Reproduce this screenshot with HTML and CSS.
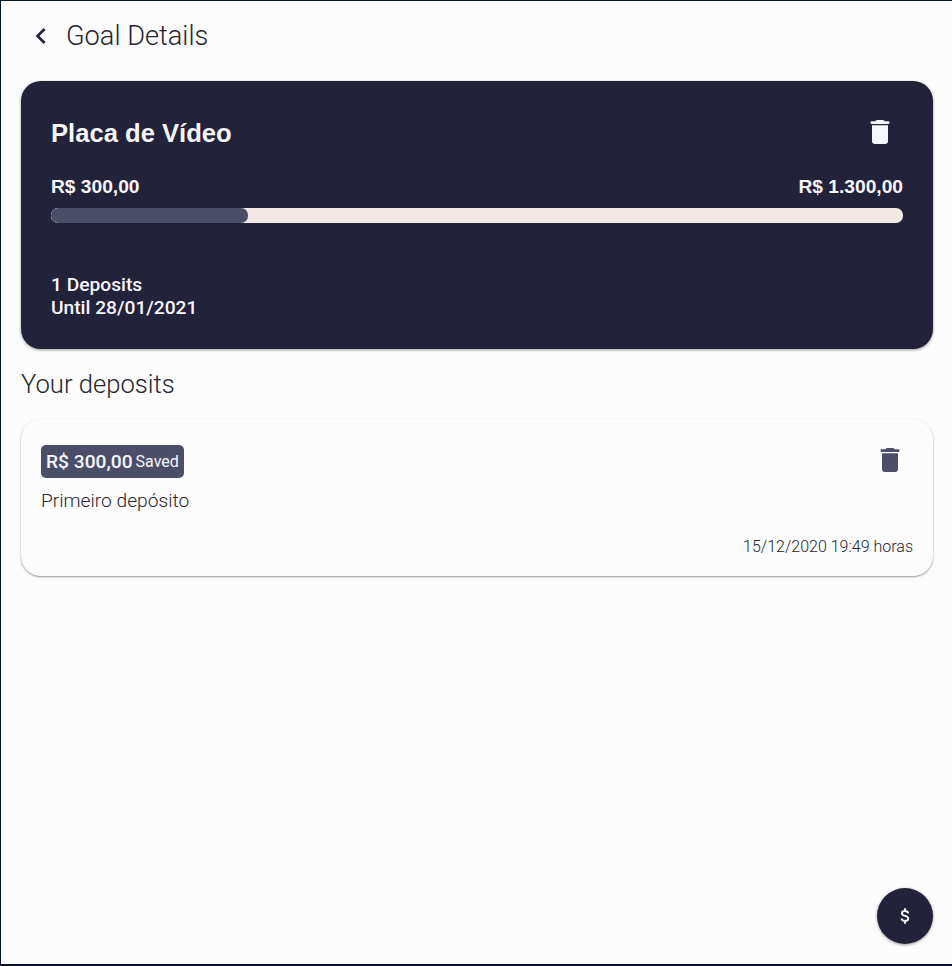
FILE: index.html
```html
<!DOCTYPE html>
<html lang="en">
<head>
<meta charset="utf-8">
<title>Goal Details</title>
<link rel="stylesheet" href="styles.css">
</head>
<body>
<main class="screen">
  <header class="header">
    <svg class="icon" viewBox="0 0 24 24"><path d="M15.41 7.41 14 6l-6 6 6 6 1.41-1.41L10.83 12z"/></svg>
    <h1>Goal Details</h1>
  </header>
  <section class="goal">
    <div class="goal-top">
      <h2>Placa de Vídeo</h2>
      <svg class="icon" viewBox="0 0 24 24"><path d="M6 19c0 1.1.9 2 2 2h8c1.1 0 2-.9 2-2V7H6v12zM19 4h-3.5l-1-1h-5l-1 1H5v2h14V4z"/></svg>
    </div>
    <div class="amounts"><span>R$ 300,00</span><span>R$ 1.300,00</span></div>
    <div class="track"><div class="fill" style="width:23.08%"></div></div>
    <div class="info"><p>1 Deposits</p><p>Until 28/01/2021</p></div>
  </section>
  <h3>Your deposits</h3>
  <section class="deposit">
    <div class="deposit-top">
      <div class="badge"><strong>R$ 300,00</strong><span>Saved</span></div>
      <svg class="icon" viewBox="0 0 24 24"><path d="M6 19c0 1.1.9 2 2 2h8c1.1 0 2-.9 2-2V7H6v12zM19 4h-3.5l-1-1h-5l-1 1H5v2h14V4z"/></svg>
    </div>
    <p class="description">Primeiro depósito</p>
    <p class="date">15/12/2020 19:49 horas</p>
  </section>
  <div class="fab">
    <svg viewBox="0 0 10 16"><path d="M8.2 5.4C8 3.8 6.7 3 5 3 3.200 3 1.900 3.900 1.900 5.300 1.900 6.800 3.200 7.400 5 7.900 6.900 8.400 8.300 9 8.300 10.600 8.300 12.100 6.900 13 5.100 13 3.200 13 1.800 12.200 1.600 10.500M5 .2V3M5 13v2.800"/></svg>
  </div>
</main>
</body>
</html>
```
FILE: styles.css
```css
* { box-sizing: border-box; margin: 0; padding: 0; }
body { background: #fcfcfc; font-family: Roboto, sans-serif; color: #22223b; }
.screen {
  height: 966px;
  padding: 19px 19px 0 20px;
  border: solid #04142f;
  border-width: 1px 0 2px 1px;
}
svg { display: block; fill: currentColor; }
.icon { width: 32px; height: 32px; flex: none; }
.header { display: flex; align-items: center; height: 32px; padding-left: 4px; gap: 9px; }
h1 { font-size: 27.2px; font-weight: 300; line-height: 32px; color: #25252f; }
.goal {
  height: 268px;
  margin-top: 29px;
  padding: 30px;
  border-radius: 20px;
  background: #22223b;
  color: #f8f7ff;
  box-shadow: 0 1px 3px rgba(0,0,0,.4);
}
.goal-top { display: flex; justify-content: space-between; align-items: center; height: 42px; padding-right: 7px; }
h2 { padding-top: 2px; font: bold 25.6px/30px "Liberation Sans", sans-serif; }
.amounts { display: flex; justify-content: space-between; margin-top: 23px; font: bold 19.2px/22px "Liberation Sans", sans-serif; }
.track { height: 15px; margin-top: 10px; border-radius: 7px; background: #f2e9e4; overflow: hidden; }
.fill { height: 100%; border-radius: 7px; background: #4a4e69; }
.info { margin-top: 50px; font-size: 19.2px; line-height: 23px; font-weight: 500; }
h3 { margin-top: 20px; font-size: 25.6px; line-height: 30px; font-weight: 300; color: #25252f; }
.deposit {
  height: 157px;
  margin-top: 20px;
  padding: 20px;
  border-radius: 20px;
  background: #fcfcfc;
  box-shadow: 0 1px 2px rgba(0,0,0,.4);
}
.deposit-top { display: flex; justify-content: space-between; align-items: center; height: 42px; padding-right: 7px; color: #4a4e69; }
.badge { display: flex; align-items: center; gap: 3px; height: 33px; padding: 0 5px; margin-top: 3px; border-radius: 5px; background: #4a4e69; color: #f8f7ff; }
.badge strong { font-size: 19.2px; font-weight: 500; }
.badge span { font-size: 16px; }
.description { margin-top: 8px; font-size: 19.2px; line-height: 23px; font-weight: 300; color: #25252f; }
.date { margin-top: 25px; font-size: 16px; line-height: 19px; font-weight: 300; text-align: right; color: #25252f; }
.fab {
  position: absolute;
  left: 877px;
  top: 888px;
  display: grid;
  place-items: center;
  width: 56px;
  height: 56px;
  padding-right: 1px;
  border-radius: 50%;
  background: #22223b;
  color: #f8f7ff;
  box-shadow: 0 1px 3px rgba(0,0,0,.4);
}
.fab svg { width: 10px; height: 16px; fill: none; stroke: currentColor; stroke-width: 1.9; }
```
